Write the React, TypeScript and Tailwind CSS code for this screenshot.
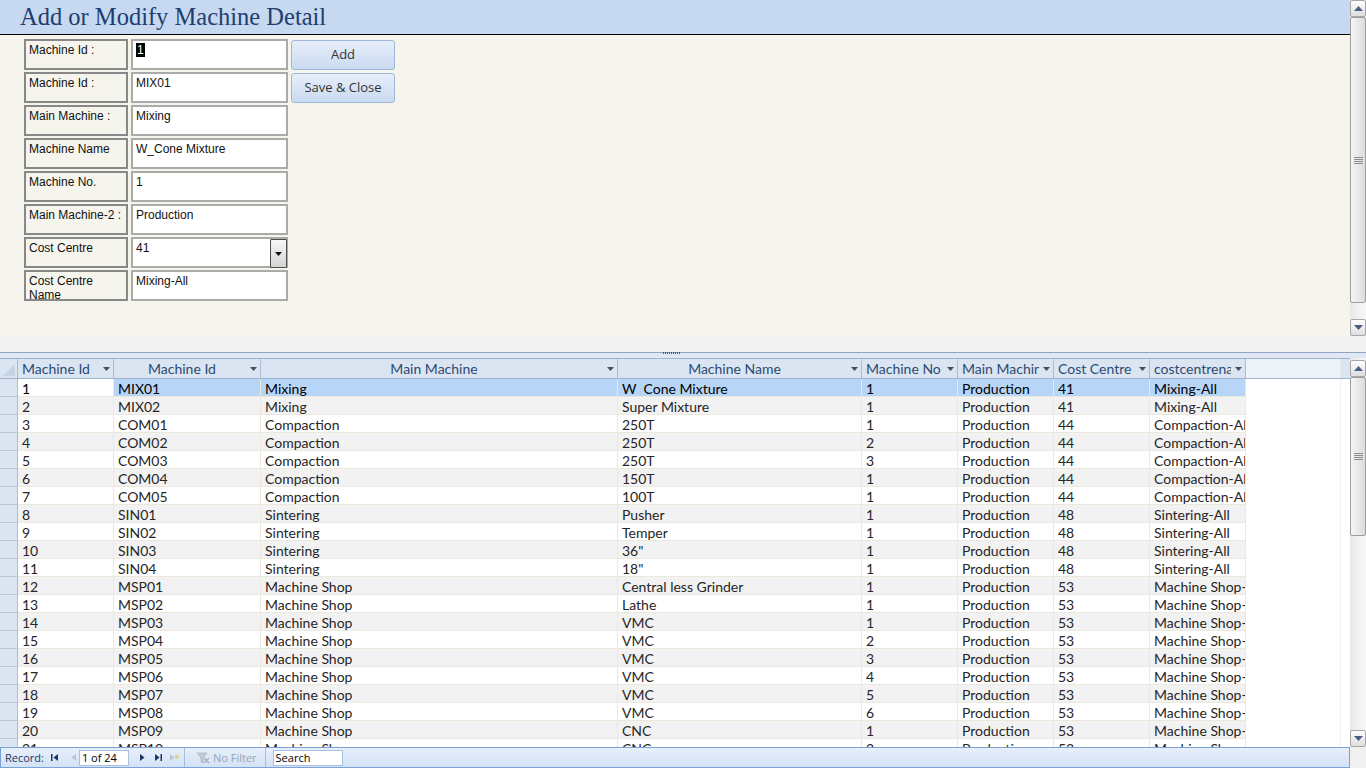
import React from 'react'

type Row = [string, string, string, string, string, string, string, string]

const rows: Row[] = [
  ['1', 'MIX01', 'Mixing', 'W  Cone Mixture', '1', 'Production', '41', 'Mixing-All'],
  ['2', 'MIX02', 'Mixing', 'Super Mixture', '1', 'Production', '41', 'Mixing-All'],
  ['3', 'COM01', 'Compaction', '250T', '1', 'Production', '44', 'Compaction-All'],
  ['4', 'COM02', 'Compaction', '250T', '2', 'Production', '44', 'Compaction-All'],
  ['5', 'COM03', 'Compaction', '250T', '3', 'Production', '44', 'Compaction-All'],
  ['6', 'COM04', 'Compaction', '150T', '1', 'Production', '44', 'Compaction-All'],
  ['7', 'COM05', 'Compaction', '100T', '1', 'Production', '44', 'Compaction-All'],
  ['8', 'SIN01', 'Sintering', 'Pusher', '1', 'Production', '48', 'Sintering-All'],
  ['9', 'SIN02', 'Sintering', 'Temper', '1', 'Production', '48', 'Sintering-All'],
  ['10', 'SIN03', 'Sintering', '36"', '1', 'Production', '48', 'Sintering-All'],
  ['11', 'SIN04', 'Sintering', '18"', '1', 'Production', '48', 'Sintering-All'],
  ['12', 'MSP01', 'Machine Shop', 'Central less Grinder', '1', 'Production', '53', 'Machine Shop-All'],
  ['13', 'MSP02', 'Machine Shop', 'Lathe', '1', 'Production', '53', 'Machine Shop-All'],
  ['14', 'MSP03', 'Machine Shop', 'VMC', '1', 'Production', '53', 'Machine Shop-All'],
  ['15', 'MSP04', 'Machine Shop', 'VMC', '2', 'Production', '53', 'Machine Shop-All'],
  ['16', 'MSP05', 'Machine Shop', 'VMC', '3', 'Production', '53', 'Machine Shop-All'],
  ['17', 'MSP06', 'Machine Shop', 'VMC', '4', 'Production', '53', 'Machine Shop-All'],
  ['18', 'MSP07', 'Machine Shop', 'VMC', '5', 'Production', '53', 'Machine Shop-All'],
  ['19', 'MSP08', 'Machine Shop', 'VMC', '6', 'Production', '53', 'Machine Shop-All'],
  ['20', 'MSP09', 'Machine Shop', 'CNC', '1', 'Production', '53', 'Machine Shop-All'],
  ['21', 'MSP10', 'Machine Shop', 'CNC', '2', 'Production', '53', 'Machine Shop-All'],
]

const fields: { label: string; value: string; combo?: boolean }[] = [
  { label: 'Machine Id :', value: '1' },
  { label: 'Machine Id :', value: 'MIX01' },
  { label: 'Main Machine :', value: 'Mixing' },
  { label: 'Machine Name', value: 'W_Cone Mixture' },
  { label: 'Machine No.', value: '1' },
  { label: 'Main Machine-2 :', value: 'Production' },
  { label: 'Cost Centre', value: '41', combo: true },
  { label: 'Cost Centre Name', value: 'Mixing-All' },
]

const cols = 'grid grid-cols-[18px_96px_147px_357px_244px_96px_96px_96px_96px_95px]'

function Arrow({ up }: { up?: boolean }) {
  return (
    <svg width="9" height="5" viewBox="0 0 9 5">
      <path d={up ? 'M0 5 L4.5 0 L9 5 Z' : 'M0 0 L9 0 L4.5 5 Z'} fill="#4a5d82" />
    </svg>
  )
}

function ScrollButton({ up }: { up?: boolean }) {
  return (
    <div className="h-[17px] w-[16px] shrink-0 flex items-center justify-center rounded-[2px] border border-[#a7a7a7] bg-gradient-to-b from-[#fdfdfd] to-[#dedede]">
      <Arrow up={up} />
    </div>
  )
}

function Thumb({ className }: { className: string }) {
  return (
    <div className={`w-[16px] shrink-0 flex items-center justify-center rounded-[2px] border border-[#9d9d9d] bg-gradient-to-r from-[#f6f6f6] to-[#dcdcdc] ${className}`}>
      <div className="flex flex-col gap-[1px]">
        <div className="h-px w-[9px] bg-[#8c8c8c]" />
        <div className="h-px w-[9px] bg-[#8c8c8c]" />
        <div className="h-px w-[9px] bg-[#8c8c8c]" />
        <div className="h-px w-[9px] bg-[#8c8c8c]" />
      </div>
    </div>
  )
}

function HeadCell({ text, center }: { text: string; center?: boolean }) {
  return (
    <div className="flex items-center min-w-0 pl-[4px] pr-[3px] border-r border-[#a9bdd6]">
      <span className={`flex-1 min-w-0 overflow-hidden whitespace-nowrap ${center ? 'text-center' : ''}`}>{text}</span>
      <svg width="7" height="4" viewBox="0 0 7 4" className="shrink-0 ml-[4px]">
        <path d="M0 0 L7 0 L3.5 4 Z" fill="#3d4f6e" />
      </svg>
    </div>
  )
}

function NavIcon({ kind, dim }: { kind: 'first' | 'prev' | 'next' | 'last' | 'new'; dim?: boolean }) {
  const c = dim ? '#b7c3d3' : '#1d3763'
  return (
    <svg width="10" height="9" viewBox="0 0 10 9">
      {kind === 'first' && (
        <>
          <rect x="1" y="1" width="1.5" height="7" fill={c} />
          <path d="M8 1 L3.5 4.5 L8 8 Z" fill={c} />
        </>
      )}
      {kind === 'prev' && <path d="M7 1 L2.5 4.5 L7 8 Z" fill={c} />}
      {kind === 'next' && <path d="M3 1 L7.5 4.5 L3 8 Z" fill={c} />}
      {kind === 'last' && (
        <>
          <path d="M2 1 L6.5 4.5 L2 8 Z" fill={c} />
          <rect x="7.5" y="1" width="1.5" height="7" fill={c} />
        </>
      )}
      {kind === 'new' && (
        <>
          <path d="M1 1 L5 4.5 L1 8 Z" fill={c} />
          <path d="M6 2 L9.5 5.5 M9.5 2 L6 5.5 M7.75 1.5 L7.75 6 M5.5 3.75 L10 3.75" stroke="#e0c87a" strokeWidth="0.8" />
        </>
      )}
    </svg>
  )
}

export default function App() {
  return (
    <div className="h-screen w-full overflow-hidden flex flex-col bg-white font-['Liberation_Sans',Arial,sans-serif]">
      {/* Form section */}
      <div className="h-[336px] flex shrink-0">
        <div className="flex-1 flex flex-col min-w-0">
          <div className="h-[35px] shrink-0 bg-[#c6d9f1] border-b border-black flex items-center pl-[20px] pt-[1px]">
            <h1 className="font-['Liberation_Serif','Times_New_Roman',serif] text-[24.5px] text-[#1f3e6f] leading-none">
              Add or Modify Machine Detail
            </h1>
          </div>
          <div className="flex-1 bg-[#f5f5ee] pl-[24px] pt-[4px] flex items-start gap-[3px]">
            <div className="flex flex-col gap-[2px]">
              {fields.map((f, i) => (
                <div key={i} className="flex gap-[3px] h-[31px]">
                  <div className="w-[104px] border-2 border-[#888] bg-[#f5f5ee] px-[3px] pt-[2px] text-[12px] leading-[14px] text-[#111] overflow-hidden">
                    {f.label}
                  </div>
                  <div className="w-[157px] border-2 border-[#aaa] bg-white pl-[3px] pt-[2px] text-[12px] leading-[14px] text-[#111] flex">
                    <span className="flex-1">
                      {i === 0 ? <span className="bg-black text-white px-px">{f.value}</span> : f.value}
                    </span>
                    {f.combo && (
                      <div className="w-[17px] h-[29px] -mt-[2px] -mr-[1px] border border-[#4d4d4d] rounded-[1px] bg-gradient-to-b from-[#f7f7f7] to-[#d4d4d4] flex items-center justify-center">
                        <svg width="7" height="4" viewBox="0 0 7 4">
                          <path d="M0 0 L7 0 L3.5 4 Z" fill="#111" />
                        </svg>
                      </div>
                    )}
                  </div>
                </div>
              ))}
            </div>
            <div className="flex flex-col gap-[3px] pt-[1px] font-['Open_Sans',sans-serif] text-[13px] text-[#333]">
              <button className="w-[104px] h-[30px] rounded-[3px] border border-[#9fb7d9] bg-gradient-to-b from-[#e7eef9] to-[#c9daf1]">Add</button>
              <button className="w-[104px] h-[30px] rounded-[3px] border border-[#9fb7d9] bg-gradient-to-b from-[#e7eef9] to-[#c9daf1]">Save &amp; Close</button>
            </div>
          </div>
        </div>
        <div className="w-[16px] flex flex-col bg-gradient-to-r from-[#e8e8e8] to-[#f8f8f8]">
          <ScrollButton up />
          <Thumb className="h-[286px]" />
          <div className="flex-1" />
          <ScrollButton />
        </div>
      </div>

      {/* Gray strip + splitter */}
      <div className="h-[16px] shrink-0 bg-[#f3f3f3]" />
      <div className="h-[1px] shrink-0 bg-[#8ea5c3]" />
      <div className="h-[5px] shrink-0 bg-[#dfe8f4] flex justify-center">
        <div className="flex gap-[1px] -mt-[1px] -ml-[24px]">
          {Array.from({ length: 9 }).map((_, i) => (
            <div key={i} className="w-px h-[2px] bg-[#4b5a70]" />
          ))}
        </div>
      </div>

      {/* Datasheet */}
      <div className="flex-1 flex min-h-0">
        <div className="flex-1 min-w-0 overflow-hidden bg-white font-['Lato',sans-serif] text-[14px]">
          <div className={`${cols} h-[21px] border-y border-[#9fb4cf] bg-[#dbe5f1] text-[#2c4a74] leading-[19px]`}>
            <div className="border-r border-[#a9bdd6] flex items-end justify-end pb-[2px] pr-[2px]">
              <svg width="12" height="12" viewBox="0 0 12 12">
                <path d="M12 0 L12 12 L0 12 Z" fill="#c5d3e3" />
              </svg>
            </div>
            <HeadCell text="Machine Id" />
            <HeadCell text="Machine Id" center />
            <HeadCell text="Main Machine" center />
            <HeadCell text="Machine Name" center />
            <HeadCell text="Machine No" />
            <HeadCell text="Main Machine" />
            <HeadCell text="Cost Centre" />
            <HeadCell text="costcentrename" />
            <div className="bg-[#eef3fa] border-r border-[#e3e8ef]" />
          </div>
          {rows.map((r, i) => {
            const sel = i === 0
            const bg = sel ? 'bg-[#b7d6f7]' : i % 2 === 1 ? 'bg-[#f2f2f2]' : 'bg-white'
            return (
              <div key={i} className={`${cols} h-[18px] leading-[19px]`}>
                <div className="bg-[#dbe5f1] border-r border-[#a9bdd6] border-b border-b-[#b8c8dc]" />
                {r.map((c, j) => (
                  <div
                    key={j}
                    className={`overflow-hidden whitespace-pre pl-[4px] border-r border-b border-[#ebe9dc] ${
                      sel && j === 0 ? 'bg-white' : bg
                    } ${sel ? 'text-black' : 'text-[#262626]'}`}
                  >
                    {c}
                  </div>
                ))}
                <div className="bg-white border-r border-[#f0f0f0]" />
              </div>
            )
          })}
        </div>
        <div className="w-[16px] flex flex-col pt-[2px] bg-gradient-to-r from-[#e8e8e8] to-[#f8f8f8]">
          <ScrollButton up />
          <Thumb className="h-[159px]" />
          <div className="flex-1" />
          <ScrollButton />
        </div>
      </div>

      {/* Record navigation bar */}
      <div className="h-[21px] shrink-0 flex bg-[#f0f0f0]">
        <div className="w-[1350px] border border-[#7ba2d6] bg-gradient-to-b from-[#e7effa] to-[#d3e2f6] flex items-center font-['Open_Sans',sans-serif] text-[11px] leading-[14px] text-[#1d3763]">
          <span className="pl-[4px]">Record:</span>
          <span className="ml-[6px] flex items-center"><NavIcon kind="first" /></span>
          <span className="ml-[9px] flex items-center"><NavIcon kind="prev" dim /></span>
          <div className="ml-[0px] w-[50px] h-[16px] bg-white border border-[#a9c0df] pl-[2px] leading-[14px] text-black">1 of 24</div>
          <span className="ml-[8px] flex items-center"><NavIcon kind="next" /></span>
          <span className="ml-[6px] flex items-center"><NavIcon kind="last" /></span>
          <span className="ml-[6px] flex items-center"><NavIcon kind="new" dim /></span>
          <div className="ml-[5px] w-px h-[19px] bg-[#a6bfe0]" />
          <svg width="14" height="12" viewBox="0 0 14 12" className="ml-[11px]">
            <path d="M1 1 L11 1 L7 6 L7 11 L5 10 L5 6 Z" fill="#c2c9d2" stroke="#a5aeb9" strokeWidth="0.6" />
            <path d="M8 6 L13 11 M13 6 L8 11" stroke="#a5aeb9" strokeWidth="1.3" />
          </svg>
          <span className="ml-[3px] text-[#9aa5b4]">No Filter</span>
          <div className="ml-[8px] w-px h-[19px] bg-[#a6bfe0]" />
          <div className="ml-[7px] w-[70px] h-[16px] bg-white border border-[#a9c0df] pl-[2px] leading-[14px] text-black">Search</div>
        </div>
      </div>
    </div>
  )
}
